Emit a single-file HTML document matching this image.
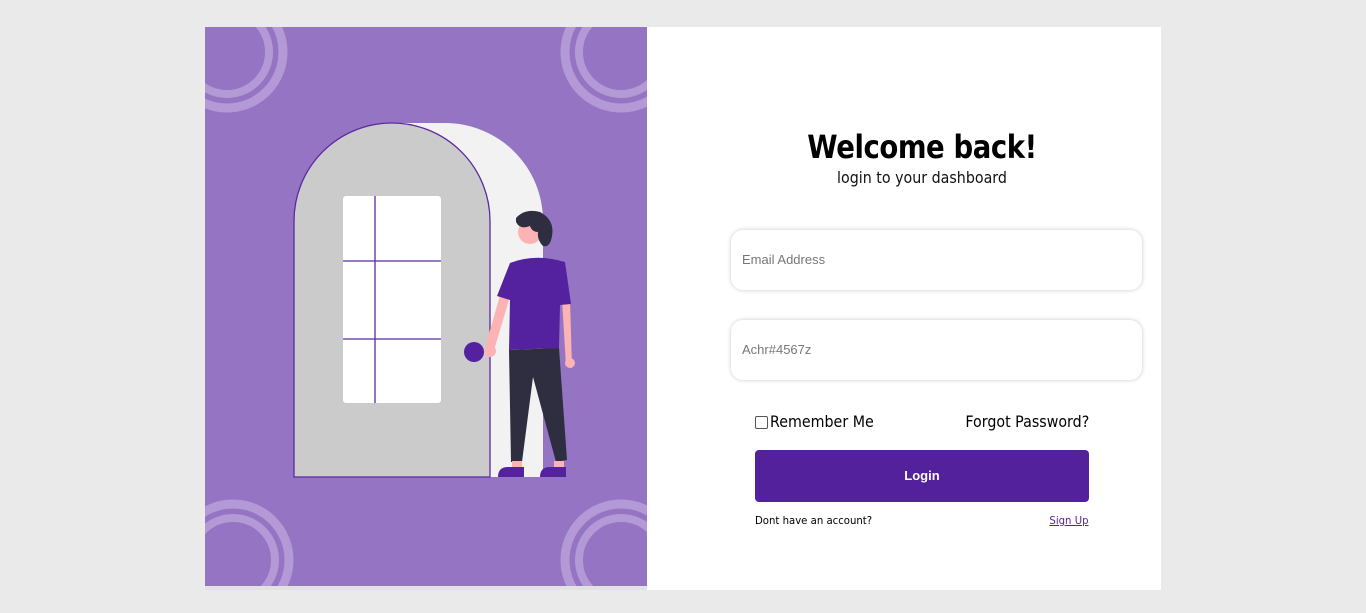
<!DOCTYPE html>
<html><head><style>
body{margin:0;background:#eaeaea;width:1366px;height:613px;position:relative;overflow:hidden;font-family:"Liberation Sans",sans-serif}
.a{position:absolute}
.inp{position:absolute;left:731px;width:411px;height:60px;background:#fff;border-radius:12px;box-shadow:0 0 4px rgba(0,0,0,.22);font-size:13px;color:#777;line-height:60px;text-indent:11px}
</style></head><body>
<div class="a" style="left:205px;top:586px;width:478px;height:4px;background:#e2e2e2"></div>
<div class="a" style="left:647px;top:27px;width:514px;height:563px;background:#fff"></div>
<svg class="a" style="left:205px;top:27px" width="442" height="559" viewBox="205 27 442 559">
<rect x="205" y="27" width="442" height="559" fill="#9474c3"/>
<g fill="none" stroke="#b39ad6">
<circle cx="227" cy="52" r="56" stroke-width="9"/><circle cx="227" cy="52" r="42" stroke-width="8"/>
<circle cx="621" cy="52" r="56" stroke-width="9"/><circle cx="621" cy="52" r="42" stroke-width="8"/>
<circle cx="233" cy="560" r="56" stroke-width="9"/><circle cx="233" cy="560" r="42" stroke-width="8"/>
<circle cx="621" cy="560" r="56" stroke-width="9"/><circle cx="621" cy="560" r="42" stroke-width="8"/>
</g>
<path d="M400 123 H445 A98 98 0 0 1 543 221 V477 H400 Z" fill="#f2f2f2"/>
<path d="M294 477 V221 A98 98 0 0 1 490 221 V477 Z" fill="#cbcbcb" stroke="#5b2aa0" stroke-width="1.3"/>
<rect x="343" y="196" width="98" height="207" rx="3" fill="#fff"/>
<g stroke="#5b2aa0" stroke-width="1.3"><line x1="375" y1="196" x2="375" y2="403"/><line x1="343" y1="261" x2="441" y2="261"/><line x1="343" y1="339" x2="441" y2="339"/></g>
<circle cx="474" cy="352" r="10" fill="#55229f"/>
<path d="M503 285 L486 344 L492 357 L509 300 Z" fill="#fdb3b3"/>
<path d="M562 300 L566 366 L572 368 L570 300 Z" fill="#fdb3b3"/>
<circle cx="570" cy="363" r="5" fill="#fdb3b3"/>
<circle cx="490" cy="351" r="6" fill="#fdb3b3"/>
<circle cx="530" cy="232" r="12" fill="#fdb3b3"/>
<path d="M516 218 Q525 208 540 212 Q555 220 552 236 Q550 248 543 246 Q537 240 538 232 Q532 232 530 226 Q520 230 516 222 Z" fill="#2f2e41"/>
<path d="M510 263 Q535 253 565 262 L571 304 L560 305 L559 348 L509 350 L510 300 L497 296 Z" fill="#55229f"/>
<path d="M509 350 L559 348 L567 460 L556 462 L533 377 L522 462 L511 462 Z" fill="#2f2e41"/>
<rect x="512" y="461" width="10" height="8" fill="#fdb3b3"/><rect x="554" y="461" width="10" height="8" fill="#fdb3b3"/>
<path d="M498 477 Q498 467 508 467 H524 V477 Z" fill="#55229f"/>
<path d="M540 477 Q540 467 550 467 H566 V477 Z" fill="#55229f"/>
</svg>
<div class="a" style="left:647px;width:550px;top:128px;text-align:center;font-size:32px;font-weight:bold;color:#000;font-family:'DejaVu Sans',sans-serif;letter-spacing:-0.5px;transform:scaleX(.86)">Welcome back!</div>
<div class="a" style="left:647px;width:550px;top:168px;text-align:center;font-size:16px;color:#111;font-family:'DejaVu Sans',sans-serif;transform:scaleX(.89)">login to your dashboard</div>
<div class="inp" style="top:230px">Email Address</div>
<div class="inp" style="top:320px">Achr#4567z</div>
<div class="a" style="left:755px;top:416px;width:11px;height:11px;border:1px solid #555;border-radius:2px;background:#fff"></div>
<div class="a" style="left:770px;top:412px;font-size:16px;font-family:'DejaVu Sans',sans-serif;transform-origin:left;transform:scaleX(.89)">Remember Me</div>
<div class="a" style="right:277px;top:412px;font-size:16px;font-family:'DejaVu Sans',sans-serif;transform-origin:right;transform:scaleX(.89)">Forgot Password?</div>
<div class="a" style="left:755px;top:450px;width:334px;height:52px;background:#54219c;border-radius:4px;color:#fff;font-weight:bold;font-size:13px;text-align:center;line-height:52px">Login</div>
<div class="a" style="left:755px;top:514px;font-size:11px;font-family:'DejaVu Sans',sans-serif;transform-origin:left;transform:scaleX(.92)">Dont have an account?</div>
<div class="a" style="right:277px;top:514px;font-size:11px;color:#55229f;text-decoration:underline;font-family:'DejaVu Sans',sans-serif;transform-origin:right;transform:scaleX(.92)">Sign Up</div>
</body></html>
